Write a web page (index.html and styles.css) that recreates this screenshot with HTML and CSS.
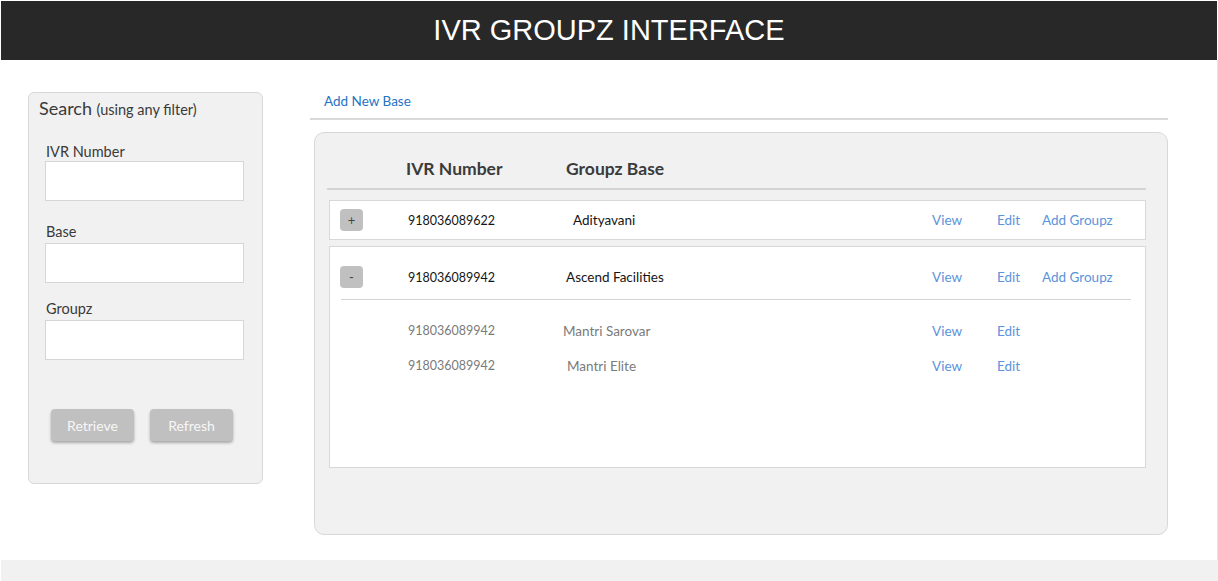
FILE: index.html
```html
<!DOCTYPE html>
<html>
<head>
<meta charset="utf-8">
<link rel="stylesheet" href="styles.css">
</head>
<body>
<div class="page">
  <header class="topbar">IVR GROUPZ INTERFACE</header>
  <div class="content">
    <aside class="sidebar">
      <div class="side-title">Search <span class="side-sub">(using any filter)</span></div>
      <div class="field first">
        <label class="field-label">IVR Number</label>
        <input class="field-input" type="text">
      </div>
      <div class="field second">
        <label class="field-label">Base</label>
        <input class="field-input" type="text">
      </div>
      <div class="field third">
        <label class="field-label">Groupz</label>
        <input class="field-input" type="text">
      </div>
      <div class="side-actions">
        <button class="btn">Retrieve</button>
        <button class="btn">Refresh</button>
      </div>
    </aside>
    <main class="main">
      <div class="toolbar"><a class="add-link">Add New Base</a></div>
      <section class="panel">
        <div class="table-head">
          <span class="th th-num">IVR Number</span>
          <span class="th">Groupz Base</span>
        </div>
        <div class="row-box">
          <div class="grid-row">
            <span class="cell"><span class="toggle">+</span></span>
            <span class="num">918036089622</span>
            <span class="name nudge-7">Adityavani</span>
            <a class="act">View</a>
            <a class="act">Edit</a>
            <a class="act">Add Groupz</a>
          </div>
        </div>
        <div class="row-box expanded">
          <div class="grid-row">
            <span class="cell"><span class="toggle">-</span></span>
            <span class="num">918036089942</span>
            <span class="name">Ascend Facilities</span>
            <a class="act">View</a>
            <a class="act">Edit</a>
            <a class="act">Add Groupz</a>
          </div>
          <div class="sub-divider"></div>
          <div class="sub-list">
            <div class="grid-row sub">
              <span class="cell"></span>
              <span class="num">918036089942</span>
              <span class="name nudge-m3">Mantri Sarovar</span>
              <a class="act">View</a>
              <a class="act">Edit</a>
              <span></span>
            </div>
            <div class="grid-row sub">
              <span class="cell"></span>
              <span class="num">918036089942</span>
              <span class="name nudge-1">Mantri Elite</span>
              <a class="act">View</a>
              <a class="act">Edit</a>
              <span></span>
            </div>
          </div>
        </div>
      </section>
    </main>
  </div>
  <footer class="bottombar"></footer>
</div>
</body>
</html>
```

FILE: styles.css
```css
* { box-sizing: border-box; }
html, body { margin: 0; padding: 0; background: #fff; }
body { font-family: Lato, "Open Sans", sans-serif; color: #333; }

.page {
  width: 1218px;
  height: 581px;
  padding: 1px 0 0 1px;
  display: flex;
  flex-direction: column;
}

.topbar {
  width: 1216px;
  height: 59px;
  background: #282828;
  color: #fff;
  font-family: "Liberation Sans", Arial, sans-serif;
  font-size: 29px;
  line-height: 59px;
  text-align: center;
}

.content {
  width: 1217px;
  height: 500px;
  display: flex;
  align-items: flex-start;
  border-right: 1px solid #e6e6e6;
}

.sidebar {
  margin: 32px 0 0 27px;
  width: 235px;
  height: 392px;
  background: #f1f1f1;
  border: 1px solid #d8d8d8;
  border-radius: 6px;
  padding: 4px 18px 0 16px;
}
.side-title {
  margin-left: -6px;
  height: 22px;
  font-size: 18px;
  line-height: 22px;
  color: #3a3a3a;
  white-space: nowrap;
}
.side-sub { font-size: 14.5px; line-height: 1; color: #3a3a3a; }

.field { display: flex; flex-direction: column; }
.field.first { margin-top: 24px; }
.field.second { margin-top: 22px; }
.field.third { margin-top: 17px; }
.field-label {
  font-size: 14.5px;
  line-height: 18px;
  height: 18px;
  margin: 0 0 2px 1px;
  color: #3a3a3a;
}
.field.first .field-label { margin-bottom: 0; }
.field-input {
  width: 199px;
  height: 40px;
  border: 1px solid #d6d6d6;
  background: #fff;
  margin: 0;
  padding: 0 6px;
  font: inherit;
  outline: none;
}

.side-actions {
  margin: 49px 0 0 6px;
  display: flex;
  gap: 16px;
}
.btn {
  width: 83px;
  height: 32px;
  border: none;
  border-radius: 4px;
  background: #c0c0c0;
  color: #f7f7f7;
  font-family: Lato, "Open Sans", sans-serif;
  font-size: 14px;
  box-shadow: 0 2px 3px rgba(0, 0, 0, 0.3);
  padding: 0;
}

.main {
  margin: 33px 0 0 47px;
  width: 858px;
}
.toolbar {
  padding: 0 0 9px 14px;
  border-bottom: 2px solid #d9d9d9;
}
.add-link {
  display: block;
  font-size: 13.5px;
  line-height: 16px;
  color: #1f72c4;
}

.panel {
  margin: 12px 0 0 4px;
  width: 854px;
  height: 403px;
  background: #f1f1f1;
  border: 1px solid #d8d8d8;
  border-radius: 10px;
  padding: 26px 21px 0 12px;
}
.table-head {
  display: flex;
  height: 31px;
  padding-bottom: 9px;
  border-bottom: 2px solid #d4d4d4;
}
.th {
  font-weight: bold;
  font-size: 17.5px;
  line-height: 20px;
  color: #3b3b3b;
}
.th-num { margin-left: 79px; width: 160px; }

.row-box {
  margin: 10px 0 0 2px;
  background: #fff;
  border: 1px solid #d8d8d8;
  height: 40px;
  padding-top: 8px;
}
.row-box.expanded {
  margin-top: 6px;
  height: 222px;
  padding-top: 19px;
}

.grid-row {
  display: grid;
  grid-template-columns: 78px 158px 366px 65px 45px 1fr;
  align-items: center;
  height: 22px;
  font-size: 13.5px;
}
.cell { display: flex; align-items: center; }
.toggle {
  margin-left: 10px;
  width: 23px;
  height: 22px;
  border-radius: 4px;
  background: #c0c0c0;
  color: #444;
  font-size: 13px;
  line-height: 22px;
  text-align: center;
}
.num { font-size: 12.5px; color: #151515; }
.name { color: #151515; }
.nudge-7 { margin-left: 7px; }
.nudge-m3 { margin-left: -3px; }
.nudge-1 { margin-left: 1px; }
.act { color: #5b93dc; }

.sub-divider {
  margin: 11px 14px 0 11px;
  border-top: 1px solid #d4d4d4;
}
.sub-list { padding-top: 13px; }
.grid-row.sub { height: 35px; }
.grid-row.sub .num, .grid-row.sub .name { color: #7a7a7a; }

.bottombar {
  width: 1217px;
  height: 21px;
  background: #f1f1f1;
}
```
